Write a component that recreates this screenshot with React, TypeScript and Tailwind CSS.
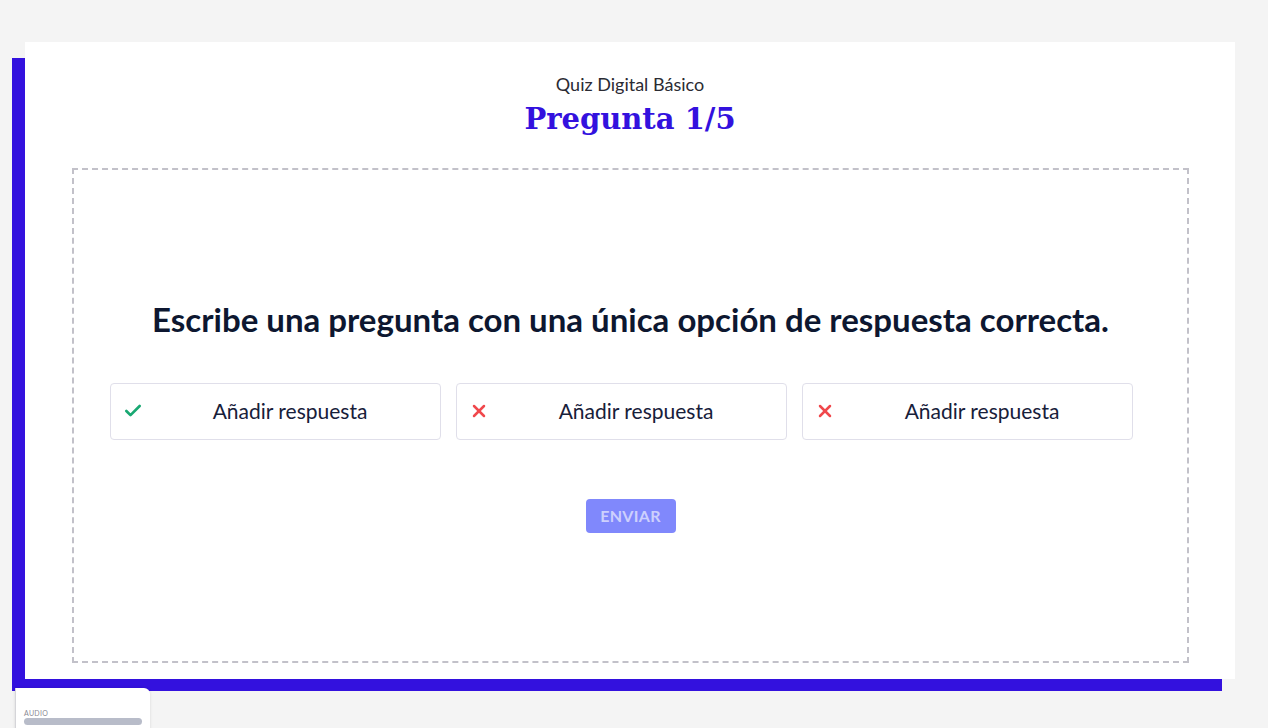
import { Check, X } from 'lucide-react';

const sans = { fontFamily: 'Lato, "Noto Sans", sans-serif' };

function AnswerOption({ correct }: { correct: boolean }) {
  return (
    <button className="flex h-[57px] w-[331px] items-center rounded-[4px] border border-[#e0dfea] bg-white pl-[12px] pr-[2px] text-[21px] text-[#17203a]">
      {correct ? (
        <Check size={20} strokeWidth={3.2} className="shrink-0 text-[#19a872]" />
      ) : (
        <X size={20} strokeWidth={3} className="shrink-0 text-[#f0484c]" />
      )}
      <span className="flex-1 text-center">Añadir respuesta</span>
    </button>
  );
}

export default function App() {
  return (
    <div className="relative h-[728px] w-[1268px] overflow-hidden bg-[#f4f4f4]" style={sans}>
      <div className="absolute left-[12px] top-[58px] h-[633px] w-[1210px] bg-[#3311de]" />
      <div className="relative ml-[25px] pt-[42px]">
        <div className="flex h-[637px] w-[1210px] flex-col bg-white">
          <div className="flex flex-col items-center pt-[30px]">
            <p className="text-[18px] leading-[24px] text-[#2b2b33]">Quiz Digital Básico</p>
            <h1
              className="mt-[3px] text-[29px] font-bold leading-[40px] text-[#3311de]"
              style={{ fontFamily: '"DejaVu Serif", serif' }}
            >
              Pregunta 1/5
            </h1>
          </div>
          <div className="ml-[47px] mr-[46px] mt-[29px] mb-[16px] flex flex-1 flex-col items-center justify-center border-2 border-dashed border-[#c2c1c9]">
            <h2 className="text-[33px] font-bold leading-[40px] text-[#0d1730]">
              Escribe una pregunta con una única opción de respuesta correcta.
            </h2>
            <div className="mt-[44px] mr-[19px] flex gap-[15px]">
              <AnswerOption correct />
              <AnswerOption correct={false} />
              <AnswerOption correct={false} />
            </div>
            <button className="mt-[59px] h-[34px] w-[90px] rounded-[4px] bg-[#8088fc] text-[16px] font-bold tracking-[0.3px] text-[#cdd0fd]">
              ENVIAR
            </button>
          </div>
        </div>
      </div>
      <div className="absolute left-[15px] top-[688px] h-[60px] w-[135px] rounded-tr-[6px] border-l border-[#d5d5d9] bg-white px-[8px] pt-[21px] shadow-[0_0_3px_rgba(0,0,0,0.12)]">
        <p className="text-[7px] leading-[8px] tracking-[0.3px] text-[#8a8a94]">AUDIO</p>
        <div className="mt-[1px] h-[7px] w-[118px] rounded-full bg-[#b8bcc9]" />
      </div>
    </div>
  );
}
